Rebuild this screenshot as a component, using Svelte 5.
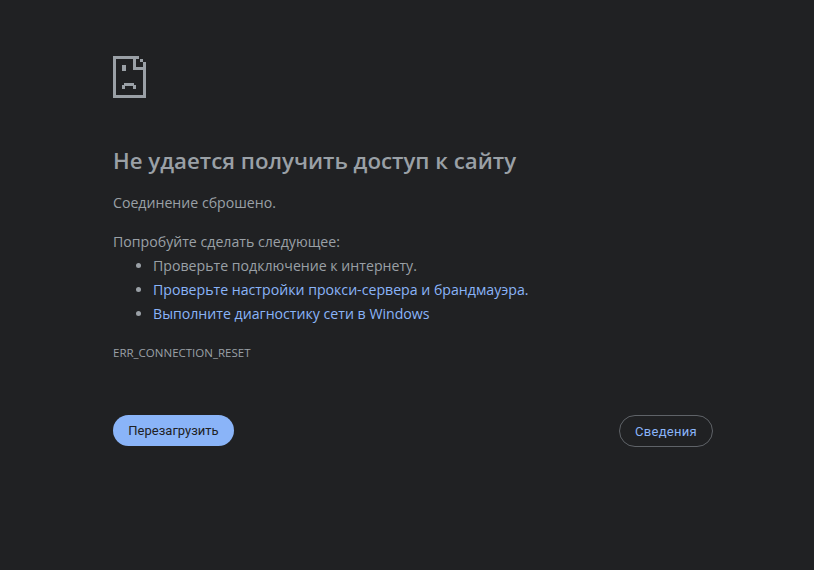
<script>
  const tips = [
    { text: 'Проверьте подключение к интернету.', link: false },
    { text: 'Проверьте настройки прокси-сервера и брандмауэра.', link: true },
    { text: 'Выполните диагностику сети в Windows', link: true }
  ];
</script>

<main class="page">
  <svg class="icon" width="33" height="42" viewBox="0 0 33 42" shape-rendering="crispEdges" aria-hidden="true">
    <path fill="#9aa0a6" d="M0 0H26V3H3V39H30V6H33V42H0Z" />
    <path fill="#9aa0a6" d="M27 3H30V6H27Z" />
    <path fill="#9aa0a6" d="M20 0H23V11H33V14H20Z" />
    <path fill="#9aa0a6" d="M9 9H13V15H9ZM11 27H21V29H23V33H20V30H12V33H9V29H11Z" />
  </svg>
  <h1>Не удается получить доступ к сайту</h1>
  <p class="sub">Соединение сброшено.</p>
  <p class="try">Попробуйте сделать следующее:</p>
  <ul>
    {#each tips as tip}
      <li class:link={tip.link}>{tip.text}</li>
    {/each}
  </ul>
  <div class="code">ERR_CONNECTION_RESET</div>
  <div class="buttons">
    <button class="primary">Перезагрузить</button>
    <button class="secondary">Сведения</button>
  </div>
</main>

<style>
  :global(body) {
    margin: 0;
    background: #202123;
  }
  .page {
    box-sizing: border-box;
    width: 600px;
    height: 570px;
    margin-left: 113px;
    padding-top: 56px;
    font-family: "Open Sans", "Noto Sans", sans-serif;
    color: #9aa0a6;
    font-size: 14.15px;
  }
  .icon {
    display: block;
  }
  h1 {
    margin: 49px 0 0;
    font-size: 22.25px;
    line-height: 27px;
    font-weight: 600;
    color: #9aa0a6;
  }
  .sub {
    margin: 17px 0 0;
    line-height: 24px;
  }
  .try {
    margin: 15px 0 0;
    line-height: 24px;
  }
  ul {
    margin: 0;
    padding: 0 0 0 40px;
  }
  li {
    line-height: 24px;
  }
  li::marker {
    color: #9aa0a6;
  }
  .link {
    color: #8ab4f8;
  }
  .code {
    margin-top: 18px;
    font-size: 11.5px;
    line-height: 18px;
    text-transform: uppercase;
  }
  .buttons {
    display: flex;
    justify-content: space-between;
    align-items: flex-start;
    margin-top: 53px;
  }
  button {
    font-family: Roboto, sans-serif;
    font-size: 13px;
    box-sizing: border-box;
    border-radius: 16px;
    height: 32px;
    padding: 0;
  }
  .primary {
    width: 121px;
    height: 31px;
    background: #8ab4f8;
    border: none;
    color: #202124;
  }
  .secondary {
    width: 94px;
    background: transparent;
    border: 1px solid #5f6368;
    color: #8ab4f8;
    letter-spacing: 0.3px;
  }
</style>
